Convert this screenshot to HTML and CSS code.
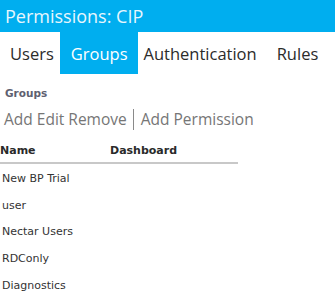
FILE: index.html
```html
<!DOCTYPE html>
<html>
<head>
<meta charset="utf-8">
<link rel="stylesheet" href="styles.css">
</head>
<body>
<header class="titlebar">Permissions: CIP</header>
<nav class="tabs">
  <a class="tab">Users</a>
  <a class="tab active">Groups</a>
  <a class="tab">Authentication</a>
  <a class="tab">Rules</a>
</nav>
<section class="panel">
  <h2 class="panel-title">Groups</h2>
  <div class="toolbar">
    <a class="tool">Add</a>
    <a class="tool">Edit</a>
    <a class="tool">Remove</a>
    <span class="sep"></span>
    <a class="tool">Add Permission</a>
  </div>
  <table class="grid">
    <thead>
      <tr><th class="col-name">Name</th><th>Dashboard</th></tr>
    </thead>
    <tbody>
      <tr><td>New BP Trial</td><td></td></tr>
      <tr><td>user</td><td></td></tr>
      <tr><td>Nectar Users</td><td></td></tr>
      <tr><td>RDConly</td><td></td></tr>
      <tr><td>Diagnostics</td><td></td></tr>
    </tbody>
  </table>
</section>
</body>
</html>
```
FILE: styles.css
```css
html, body {
  margin: 0;
  padding: 0;
  background: #fff;
}
body {
  font-family: "Open Sans", "Noto Sans", sans-serif;
  overflow: hidden;
}
.titlebar {
  background: #00aeef;
  color: #e8f6fd;
  height: 32px;
  box-sizing: border-box;
  padding-left: 5px;
  font-size: 18px;
  line-height: 33px;
}
.tabs {
  display: flex;
  height: 42px;
  padding-left: 4px;
}
.tab {
  display: block;
  padding: 0 6px;
  font-size: 16.5px;
  line-height: 43px;
  color: #2b2b2b;
}
.tab.active {
  background: #00aeef;
  color: #fff;
  padding: 0 10px 0 11px;
}
.tab:nth-child(3) {
  padding-right: 14px;
}
.panel {
  padding-top: 12px;
}
.panel-title {
  margin: 0 0 0 5px;
  font-family: "DejaVu Sans", sans-serif;
  font-size: 10.5px;
  font-weight: bold;
  color: #5e6070;
  line-height: 14px;
}
.toolbar {
  display: flex;
  align-items: center;
  margin-top: 6px;
  padding-left: 4px;
  height: 26px;
  gap: 4px;
  font-size: 15.5px;
  color: #767676;
}
.sep {
  width: 1px;
  height: 21px;
  background: #8a8a8a;
  margin: 0 3px 0 2px;
}
.grid {
  border-collapse: collapse;
  width: 238px;
  font-family: "DejaVu Sans", sans-serif;
  font-size: 11px;
  color: #333;
  margin-top: 9px;
}
.grid th {
  text-align: left;
  font-weight: bold;
  color: #2a2a2a;
  padding: 3px 0 5px 0;
  border-bottom: 2px solid #c8c8c8;
  font-size: 11px;
}
.grid .col-name {
  width: 110px;
}
.grid td {
  height: 26.75px;
  padding: 4px 0 0 2px;
  box-sizing: border-box;
}
```
